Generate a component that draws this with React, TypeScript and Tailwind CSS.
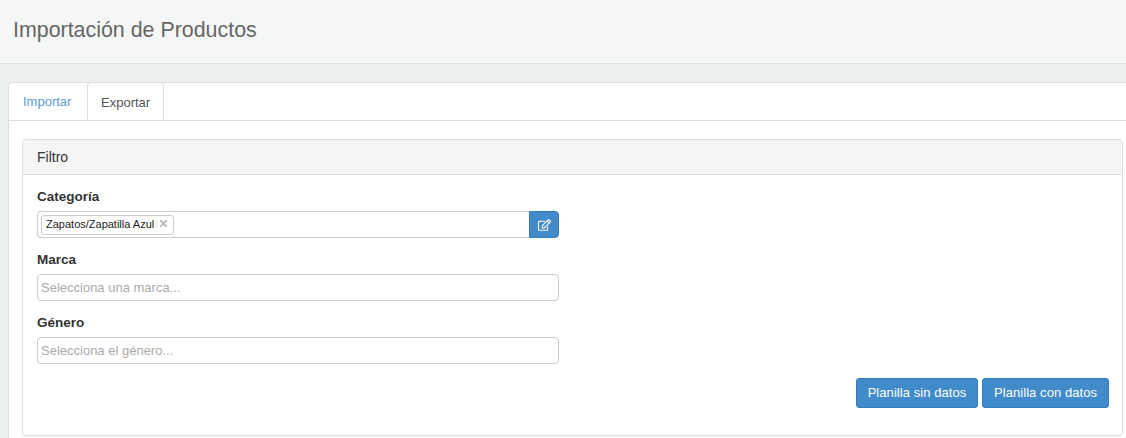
import { X } from "lucide-react";
import { FaRegEdit } from "react-icons/fa";

const font = { fontFamily: '"Liberation Sans", Arial, sans-serif' };

function Field({ label, placeholder }: { label: string; placeholder: string }) {
  return (
    <div className="mt-[12px]">
      <label className="mb-[4px] block text-[13.5px] leading-[20px] font-bold text-[#333]">{label}</label>
      <div className="h-[27px] w-[522px] rounded-[4px] border border-[#ccc] bg-white pl-[3px] text-[13px] leading-[25px] text-[#aaa]">
        {placeholder}
      </div>
    </div>
  );
}

export default function App() {
  return (
    <div className="h-[438px] w-[1126px] overflow-hidden bg-[#ecf0f1] text-[13px] text-[#333]" style={font}>
      <div className="h-[64px] border-b border-[#dfe3e4] bg-[#f5f7f7] pl-[13px] pt-[16px]">
        <h1 className="text-[21.4px] leading-[28px] font-normal text-[#666]">Importación de Productos</h1>
      </div>

      <div className="ml-[8px] mt-[18px] h-[400px] rounded-tl-[4px] border-t border-l border-[#ddd] bg-white">
        <div className="flex h-[38px] border-b border-[#ddd]">
          <div className="w-[78px] pl-[14px] pt-[10px] text-[13px] leading-[18px] text-[#5b9bd5]">Importar</div>
          <div className="-mt-px h-[38px] w-[77px] rounded-t-[4px] border border-b-0 border-[#ddd] bg-white pl-[13px] pt-[11px] text-[13px] leading-[18px] text-[#555]">
            Exportar
          </div>
        </div>

        <div className="ml-[13px] mt-[18px] h-[297px] w-[1101px] rounded-[4px] border border-[#ddd] shadow-[0_1px_1px_rgba(0,0,0,0.05)]">
          <div className="h-[35px] rounded-t-[3px] border-b border-[#ddd] bg-[#f5f5f5] pl-[14px] pt-[8px] text-[14px] leading-[18px] text-[#333]">
            Filtro
          </div>
          <div className="px-[14px] pt-[12px]">
            <label className="mb-[4px] block text-[13.5px] leading-[20px] font-bold text-[#333]">Categoría</label>
            <div className="flex h-[27px] w-[522px]">
              <div className="flex flex-1 items-center rounded-l-[4px] border border-r-0 border-[#ccc] bg-white pl-[3px]">
                <span className="flex h-[20px] items-center rounded-[3px] border border-[#ccc] bg-white pr-[4px] pl-[4px] text-[11px] text-[#222]">
                  Zapatos/Zapatilla Azul
                  <X className="mb-[2px] ml-[4px] h-[11px] w-[11px] text-[#bbb]" strokeWidth={4} />
                </span>
              </div>
              <button className="flex w-[30px] items-center justify-center rounded-r-[4px] border border-[#357ebd] bg-[#428bca] text-white">
                <FaRegEdit className="h-[12px] w-[13px]" />
              </button>
            </div>

            <Field label="Marca" placeholder="Selecciona una marca..." />
            <Field label="Género" placeholder="Selecciona el género..." />

            <div className="mt-[14px] mr-[-1px] flex justify-end gap-[4px]">
              <button className="h-[30px] w-[122px] rounded-[3px] border border-[#357ebd] bg-[#428bca] text-[13px] tracking-[0.005em] text-white">Planilla sin datos</button>
              <button className="h-[30px] w-[127px] rounded-[3px] border border-[#357ebd] bg-[#428bca] text-[13px] tracking-[0.005em] text-white">Planilla con datos</button>
            </div>
          </div>
        </div>
      </div>
    </div>
  );
}
